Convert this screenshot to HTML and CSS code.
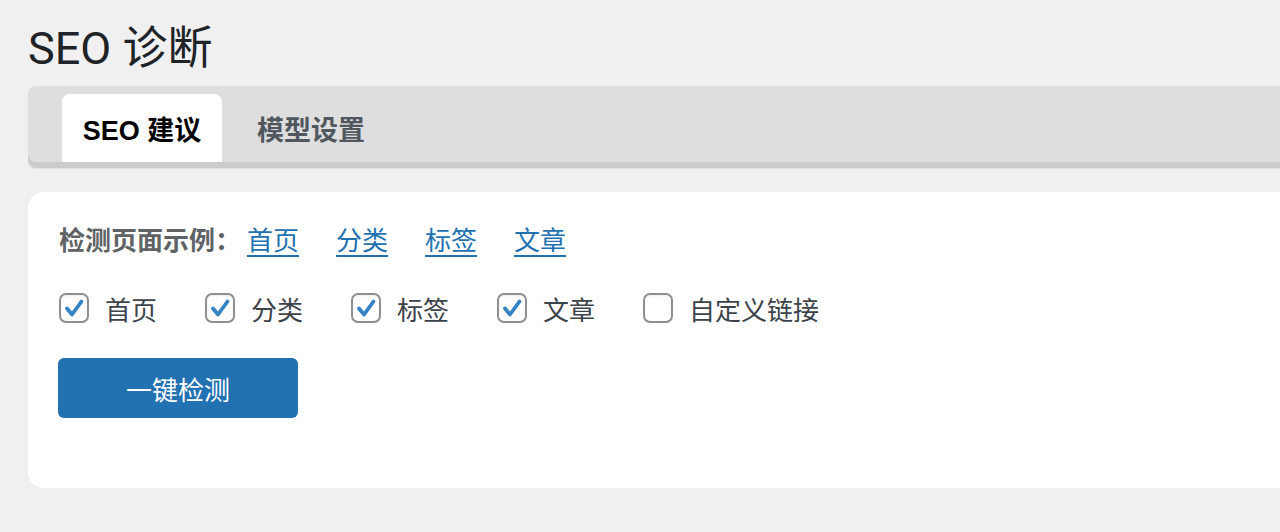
FILE: index.html
```html
<!DOCTYPE html>
<html lang="zh-CN">
<head>
<meta charset="utf-8">
<title>SEO 诊断</title>
<link rel="stylesheet" href="styles.css">
</head>
<body>
<div class="wrap">
  <h1 class="page-title">SEO 诊断</h1>
  <nav class="tabs">
    <a class="tab tab-active">SEO 建议</a>
    <a class="tab">模型设置</a>
  </nav>
  <section class="card">
    <div class="examples">
      <span class="examples-label">检测页面示例：</span>
      <a class="ex-link" href="#">首页</a>
      <a class="ex-link" href="#">分类</a>
      <a class="ex-link" href="#">标签</a>
      <a class="ex-link" href="#">文章</a>
    </div>
    <div class="checks">
      <label class="check"><span class="box"><svg viewBox="0 0 30 30" width="30" height="30"><path d="M8 15.5 L13 21.5 L22.5 8.5" fill="none" stroke="#3582c4" stroke-width="3.8" stroke-linecap="round" stroke-linejoin="round"/></svg></span><span class="check-text">首页</span></label>
      <label class="check"><span class="box"><svg viewBox="0 0 30 30" width="30" height="30"><path d="M8 15.5 L13 21.5 L22.5 8.5" fill="none" stroke="#3582c4" stroke-width="3.8" stroke-linecap="round" stroke-linejoin="round"/></svg></span><span class="check-text">分类</span></label>
      <label class="check"><span class="box"><svg viewBox="0 0 30 30" width="30" height="30"><path d="M8 15.5 L13 21.5 L22.5 8.5" fill="none" stroke="#3582c4" stroke-width="3.8" stroke-linecap="round" stroke-linejoin="round"/></svg></span><span class="check-text">标签</span></label>
      <label class="check"><span class="box"><svg viewBox="0 0 30 30" width="30" height="30"><path d="M8 15.5 L13 21.5 L22.5 8.5" fill="none" stroke="#3582c4" stroke-width="3.8" stroke-linecap="round" stroke-linejoin="round"/></svg></span><span class="check-text">文章</span></label>
      <label class="check"><span class="box"></span><span class="check-text">自定义链接</span></label>
    </div>
    <button class="btn-primary" type="button">一键检测</button>
  </section>
</div>
</body>
</html>
```

FILE: styles.css
```css
html, body {
  margin: 0;
  padding: 0;
  background: #f0f0f1;
  overflow: hidden;
}
body {
  font-family: Roboto, "Noto Sans CJK SC", sans-serif;
  color: #3c434a;
}
.wrap {
  padding-left: 28px;
  margin-right: -40px;
}
.page-title {
  margin: 0;
  padding-top: 20px;
  font-size: 45px;
  font-weight: 400;
  line-height: 58px;
  color: #1d2327;
  height: 66px;
}
.tabs {
  display: flex;
  gap: 14px;
  align-items: flex-end;
  height: 76px;
  padding: 0 0 0 34px;
  background: #dedede;
  border-radius: 8px 0 0 8px;
  box-shadow: 0 6px 0 #cbcbcb, 0 7px 0 #e2e2e2;
  box-sizing: border-box;
}
.tab {
  display: flex;
  align-items: center;
  justify-content: center;
  height: 68px;
  padding: 0 21px;
  font-size: 27px;
  font-weight: 700;
  color: #50575e;
  border-radius: 8px 8px 0 0;
  cursor: pointer;
  font-family: "Liberation Sans", "Noto Sans CJK SC", sans-serif;
}
.tab-active {
  background: #fff;
  color: #000;
  min-width: 160px;
  padding: 0;
  box-sizing: border-box;
}
.card {
  margin-top: 30px;
  background: #fff;
  border-radius: 16px 0 0 16px;
  padding: 28px 0 70px 31px;
  display: flex;
  flex-direction: column;
  align-items: flex-start;
}
.examples {
  display: flex;
  align-items: center;
  height: 36px;
  font-size: 26px;
}
.examples-label {
  font-weight: 700;
  color: #5f6366;
  margin-right: 6px;
}
.ex-link {
  color: #2271b1;
  text-decoration: underline;
  text-underline-offset: 5px;
  text-decoration-thickness: 2px;
  margin-right: 37px;
}
.checks {
  display: flex;
  align-items: center;
  gap: 48px;
  margin-top: 34px;
  height: 36px;
  font-size: 26px;
}
.check {
  display: flex;
  align-items: center;
  gap: 16px;
}
.box {
  width: 30px;
  height: 30px;
  box-sizing: border-box;
  border: 2px solid #8c8f94;
  border-radius: 7px;
  position: relative;
  background: #fff;
  box-shadow: inset 0 1px 2px rgba(0,0,0,0.08);
}
.box svg {
  position: absolute;
  left: -2px;
  top: -2px;
}
.check-text {
  color: #3c434a;
}
.btn-primary {
  margin-top: 32px;
  margin-left: -1px;
  width: 240px;
  height: 60px;
  background: #2271b1;
  border: none;
  border-radius: 6px;
  color: #fff;
  font-family: Roboto, "Noto Sans CJK SC", sans-serif;
  font-size: 26px;
  cursor: pointer;
}
```
